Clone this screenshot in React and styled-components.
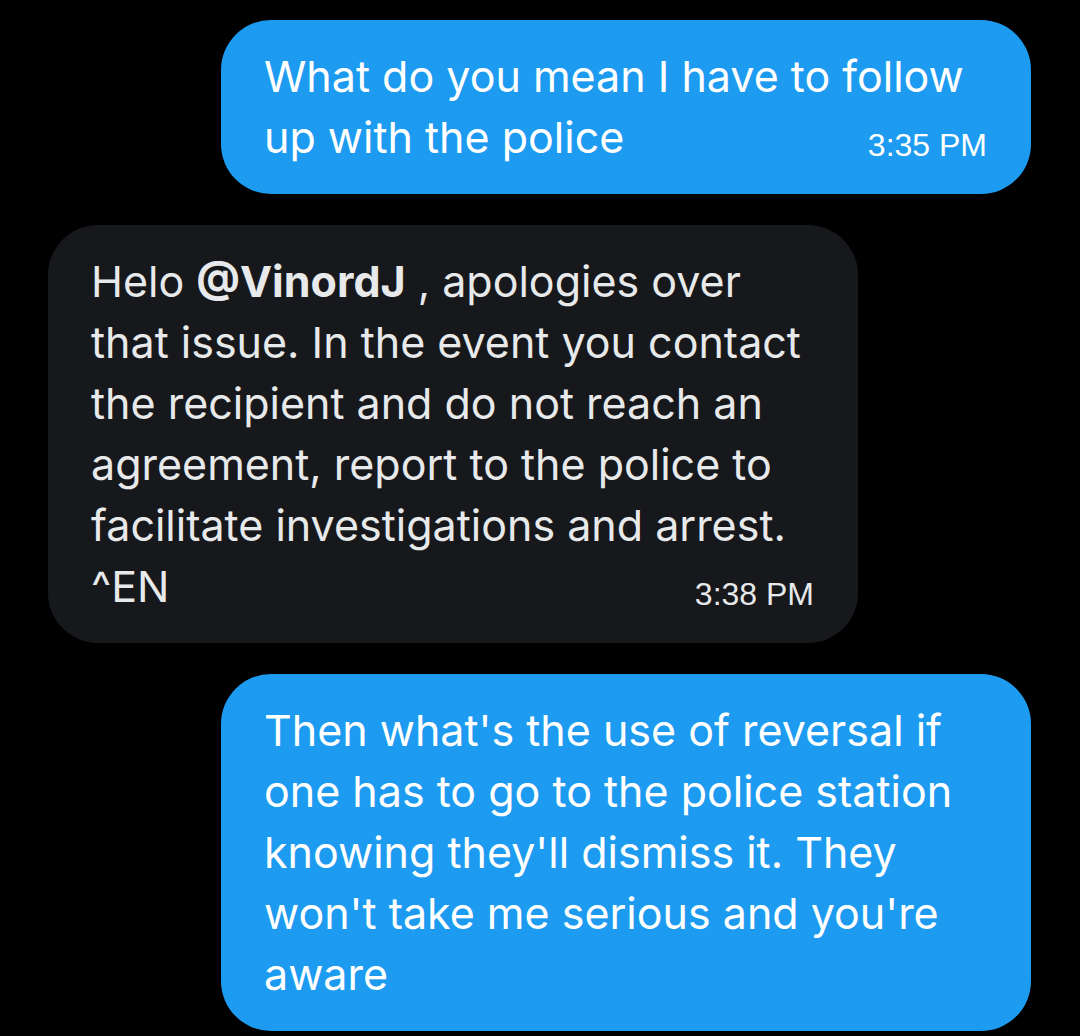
import React from 'react'
import styled, { createGlobalStyle } from 'styled-components'

const GlobalStyle = createGlobalStyle`
  html, body {
    margin: 0;
    padding: 0;
    background: #000;
  }
`

const messages = [
  {
    id: 1,
    mine: true,
    lines: ['What do you mean I have to follow', 'up with the police'],
    time: '3:35 PM',
  },
  {
    id: 2,
    mine: false,
    lines: [
      <>Helo <b>@VinordJ</b> , apologies over</>,
      'that issue. In the event you contact',
      'the recipient and do not reach an',
      'agreement, report to the police to',
      'facilitate investigations and arrest.',
      '^EN',
    ],
    time: '3:38 PM',
  },
  {
    id: 3,
    mine: true,
    lines: [
      "Then what's the use of reversal if",
      'one has to go to the police station',
      "knowing they'll dismiss it. They",
      "won't take me serious and you're",
      'aware',
    ],
  },
]

export default function App() {
  return (
    <>
      <GlobalStyle />
      <Thread>
        {messages.map(msg => (
          <Bubble key={msg.id} $mine={msg.mine}>
            {msg.lines.map((line, i) => {
              const last = i === msg.lines.length - 1
              return (
                <Line key={i}>
                  <span>{line}</span>
                  {last && msg.time && <Time>{msg.time}</Time>}
                </Line>
              )
            })}
          </Bubble>
        ))}
      </Thread>
    </>
  )
}

const Thread = styled.div`
  display: flex;
  flex-direction: column;
  gap: 31px;
  padding: 20px 49px 4px 48px;
  font-family: Inter, Roboto, sans-serif;
`
const Bubble = styled.div`
  box-sizing: border-box;
  width: 810px;
  align-self: ${p => (p.$mine ? 'flex-end' : 'flex-start')};
  padding: 26px 44px 26px 43px;
  border-radius: 50px;
  background: ${p => (p.$mine ? '#1d9bf0' : '#16181c')};
  color: ${p => (p.$mine ? '#ffffff' : '#e7e9ea')};
  font-size: 43px;
  line-height: 61px;

  b {
    font-weight: 700;
  }
`
const Line = styled.div`
  display: flex;
  align-items: baseline;
  justify-content: space-between;
  white-space: nowrap;
  height: 61px;
`
const Time = styled.span`
  font-family: "Liberation Sans", Arial, sans-serif;
  font-size: 32px;
  line-height: 32px;
  transform: translateY(3px);
`
